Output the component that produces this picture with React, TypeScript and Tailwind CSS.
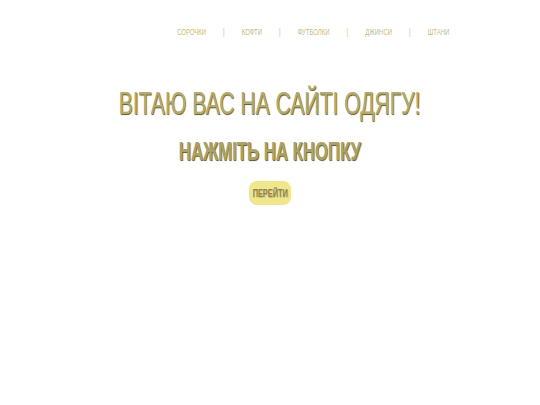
import React from 'react';

const links = ['СОРОЧКИ', 'КОФТИ', 'ФУТБОЛКИ', 'ДЖИНСИ', 'ШТАНИ'];

const App: React.FC = () => {
  return (
    <div className="w-[540px] h-[405px] bg-white font-['Liberation_Sans',Arial,sans-serif]">
      <nav className="flex justify-end pr-[91px] pt-[27px]">
        <ul className="flex items-center whitespace-nowrap origin-right scale-x-[0.66] text-[9px] leading-[10px] text-[#c4bc7c]">
          {links.map((l, i) => (
            <li key={l} className="flex items-center">
              {i > 0 && <span className="px-[26px]">|</span>}
              <a href="#">{l}</a>
            </li>
          ))}
        </ul>
      </nav>
      <main className="flex flex-col items-center pt-[48px]">
        <h1 className="whitespace-nowrap scale-x-[0.66] text-[32px] leading-[36px] text-[#b3ab6b] [text-shadow:1px_1px_1px_#5e5836]">
          ВІТАЮ ВАС НА САЙТІ ОДЯГУ!
        </h1>
        <h2 className="mt-[16px] whitespace-nowrap scale-x-[0.67] text-[25px] leading-[28px] font-bold text-[#aaa266] [text-shadow:1px_1px_1px_#5e5836]">
          НАЖМІТЬ НА КНОПКУ
        </h2>
        <button className="mt-[16px] flex h-[24px] w-[42px] items-center justify-center rounded-[8px] bg-[#f0e68c]">
          <span className="whitespace-nowrap scale-x-[0.67] text-[11px] font-bold text-[#8a8350] [text-shadow:1px_1px_1px_#c8c080]">
            ПЕРЕЙТИ
          </span>
        </button>
      </main>
    </div>
  );
};

export default App;
